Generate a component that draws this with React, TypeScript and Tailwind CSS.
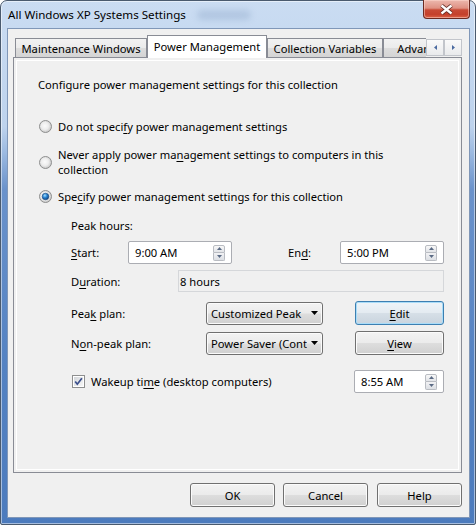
import React from "react";

const U = ({ children }: { children: React.ReactNode }) => (
  <span className="underline decoration-[1px] underline-offset-[2px]">{children}</span>
);

const BTN_GRAD =
  "bg-[linear-gradient(to_bottom,#f3f3f3_0%,#ebebeb_48%,#dddddd_52%,#d0d0d0_100%)]";

function Radio({ checked }: { checked?: boolean }) {
  return (
    <svg width="13" height="13" viewBox="0 0 13 13" className="shrink-0">
      <defs>
        <radialGradient id="rIn" cx="0.45" cy="0.45" r="0.55">
          <stop offset="0" stopColor="#fbfbfb" />
          <stop offset="0.55" stopColor="#ededed" />
          <stop offset="1" stopColor="#c8c8c8" />
        </radialGradient>
        <radialGradient id="rDot" cx="0.4" cy="0.35" r="0.7">
          <stop offset="0" stopColor="#a6e0ff" />
          <stop offset="0.45" stopColor="#2a86d4" />
          <stop offset="1" stopColor="#0a3c78" />
        </radialGradient>
      </defs>
      <circle cx="6.5" cy="6.5" r="6" fill="url(#rIn)" stroke="#8e8f8f" />
      {checked && (
        <circle cx="6.5" cy="6.5" r="3.3" fill="url(#rDot)" stroke="#19487e" strokeWidth="0.6" />
      )}
    </svg>
  );
}

function Checkbox() {
  return (
    <svg width="13" height="13" viewBox="0 0 13 13" className="shrink-0">
      <defs>
        <linearGradient id="cbG" x1="0" y1="0" x2="1" y2="1">
          <stop offset="0" stopColor="#d3d6da" />
          <stop offset="1" stopColor="#f7f7f7" />
        </linearGradient>
      </defs>
      <rect x="0.5" y="0.5" width="12" height="12" fill="#fff" stroke="#8e8f8f" />
      <rect x="2" y="2" width="9" height="9" fill="url(#cbG)" />
      <path d="M3.2 6.4 L5.3 9.2 L9.9 3.2" fill="none" stroke="#3b4f8c" strokeWidth="1.7" />
    </svg>
  );
}

function SpinArrows() {
  return (
    <div className="flex flex-col w-[12px] h-[16px] shrink-0">
      <div className="h-[8px] border border-[#b9bcc2] rounded-t-[2px] bg-[linear-gradient(to_bottom,#f8f8f8,#e2e4e8)] flex items-center justify-center">
        <svg width="5" height="3" viewBox="0 0 5 3">
          <path d="M2.5 0 L5 3 L0 3 Z" fill="#5a6a84" />
        </svg>
      </div>
      <div className="h-[8px] border border-t-0 border-[#b9bcc2] rounded-b-[2px] bg-[linear-gradient(to_bottom,#f2f2f4,#dcdfe4)] flex items-center justify-center">
        <svg width="5" height="3" viewBox="0 0 5 3">
          <path d="M0 0 L5 0 L2.5 3 Z" fill="#5a6a84" />
        </svg>
      </div>
    </div>
  );
}

function Spin({ value, className }: { value: string; className: string }) {
  return (
    <div
      className={`${className} h-[23px] bg-white border border-[#abadb3] rounded-[2px] flex items-center pl-[6px] pr-[6px] shrink-0`}
    >
      <span className="flex-1 whitespace-nowrap">{value}</span>
      <SpinArrows />
    </div>
  );
}

function Combo({ text }: { text: string }) {
  return (
    <div
      className={`w-[117px] h-[23px] rounded-[3px] border border-[#707070] ${BTN_GRAD} shadow-[inset_0_0_0_1px_#fbfbfb] flex items-center pl-[4px] pr-[4px] shrink-0`}
    >
      <span className="flex-1 overflow-hidden whitespace-nowrap">{text}</span>
      <svg width="7" height="4" viewBox="0 0 7 4" className="ml-[4px] shrink-0">
        <path d="M0 0 H7 L3.5 4 Z" fill="#000" />
      </svg>
    </div>
  );
}

function Button({
  children,
  className,
  focused,
}: {
  children: React.ReactNode;
  className: string;
  focused?: boolean;
}) {
  return (
    <div
      className={
        focused
          ? `${className} h-[24px] rounded-[3px] border border-[#3c7fb1] bg-[linear-gradient(to_bottom,#eef4f8_0%,#e4ebf1_48%,#d6dfe7_52%,#c9d4de_100%)] shadow-[inset_0_0_0_1px_#a9dcf8] flex items-center justify-center shrink-0`
          : `${className} h-[24px] rounded-[3px] border border-[#707070] ${BTN_GRAD} shadow-[inset_0_0_0_1px_#fbfbfb] flex items-center justify-center shrink-0`
      }
    >
      {children}
    </div>
  );
}

function ScrollBtn({ dir }: { dir: "l" | "r" }) {
  return (
    <div className="w-[18px] h-[17px] border border-[#c2c5cb] bg-[linear-gradient(to_bottom,#fafafa,#e9eaec)] flex items-center justify-center">
      <svg width="3" height="5" viewBox="0 0 3 5">
        {dir === "l" ? (
          <path d="M3 0 L3 5 L0 2.5 Z" fill="#4a6aa0" />
        ) : (
          <path d="M0 0 L0 5 L3 2.5 Z" fill="#4a6aa0" />
        )}
      </svg>
    </div>
  );
}

function Tab({ label, className }: { label: string; className: string }) {
  return (
    <div
      className={`${className} h-[19px] mb-[1px] shrink-0 border border-b-0 border-[#898c95] bg-[linear-gradient(to_bottom,#f2f2f2_0%,#ebebeb_50%,#dddddd_51%,#d4d4d4_100%)] flex items-center justify-center whitespace-nowrap`}
    >
      {label}
    </div>
  );
}

export default function App() {
  return (
    <div className="w-[476px] h-[525px] font-['Segoe_UI','Noto_Sans',sans-serif] text-[11.2px] leading-[15px] text-black select-none">
      <div className="relative w-full h-full flex flex-col rounded-t-[7px] rounded-b-[2px] border border-[#4a5a6e] bg-[linear-gradient(to_bottom,#cadcf2_0%,#bed3ed_24%,#9cbae1_29%,#6a92cb_36%,#5482c2_70%,#4c7bbd_100%)] shadow-[inset_0_0_0_1px_rgba(255,255,255,0.5)]">
        {/* title bar */}
        <div className="relative h-[27px] flex items-center pl-[7px]">
          <div className="absolute left-[196px] top-[9px] w-[54px] h-[10px] rounded-[5px] bg-[#8fa8c9] opacity-40 blur-[3px]" />
          <span className="relative text-[11.6px]">All Windows XP Systems Settings</span>
          <div className="absolute right-[5px] top-[-1px] w-[47px] h-[19px] rounded-b-[4px] border border-t-0 border-[#6b2a22] bg-[linear-gradient(to_bottom,#ecb8ae_0%,#df9183_45%,#c84a36_55%,#c4402c_80%,#dc6247_100%)] shadow-[inset_0_0_0_1px_rgba(255,220,210,0.5)] flex items-center justify-center">
            <svg width="15" height="11" viewBox="0 0 15 11">
              <path d="M2.5 1.5 L12.5 9.5 M12.5 1.5 L2.5 9.5" stroke="#5e2a23" strokeWidth="4" />
              <path d="M2.5 1.5 L12.5 9.5 M12.5 1.5 L2.5 9.5" stroke="#ffffff" strokeWidth="2.3" />
            </svg>
          </div>
        </div>

        {/* client area */}
        <div className="flex-1 ml-[6px] mr-[5px] mb-[6px] border border-[#8097b8] bg-[#f0f0f0] flex flex-col pl-[5px] pr-[7px]">
          {/* tabs */}
          <div className="relative z-10 mt-[6px] h-[22px] flex">
            <div className="ml-[2px] w-[411px] h-[23px] overflow-hidden flex items-end">
              <Tab label="Maintenance Windows" className="w-[132px]" />
              <div className="w-[120px] h-[23px] shrink-0 border border-b-0 border-[#898c95] bg-white flex items-center justify-center whitespace-nowrap pb-[1px]">
                Power Management
              </div>
              <Tab label="Collection Variables" className="w-[116px]" />
              <Tab label="Advanced" className="w-[80px]" />
            </div>
            <div className="flex mt-[4px] h-[17px]">
              <ScrollBtn dir="l" />
              <ScrollBtn dir="r" />
            </div>
          </div>

          {/* panel */}
          <div className="h-[416px] border border-[#898c95] bg-[#f0f0f0] p-[2px]">
            <div className="h-full border border-white pl-[21px] pt-[16px]">
              <div>Configure power management settings for this collection</div>

              <div className="mt-[27px] flex items-center">
                <span className="ml-[1px]">
                  <Radio />
                </span>
                <span className="ml-[6px] whitespace-nowrap">
                  Do not speci<U>f</U>y power management settings
                </span>
              </div>

              <div className="mt-[13px] flex items-center">
                <span className="ml-[1px]">
                  <Radio />
                </span>
                <div className="ml-[6px] flex flex-col whitespace-nowrap">
                  <span>
                    Never apply power ma<U>n</U>agement settings to computers in this
                  </span>
                  <span>collection</span>
                </div>
              </div>

              <div className="mt-[12px] flex items-center">
                <span className="ml-[1px]">
                  <Radio checked />
                </span>
                <span className="ml-[6px] whitespace-nowrap">
                  Spe<U>c</U>ify power management settings for this collection
                </span>
              </div>

              <div className="ml-[33px] w-[373px]">
                <div className="mt-[14px]">Peak hours:</div>

                <div className="mt-[8px] h-[23px] flex items-center">
                  <span className="w-[57px] shrink-0">
                    <U>S</U>tart:
                  </span>
                  <Spin value="9:00 AM" className="w-[104px]" />
                  <span className="ml-[56px] w-[52px] shrink-0">
                    En<U>d</U>:
                  </span>
                  <Spin value="5:00 PM" className="w-[104px]" />
                </div>

                <div className="mt-[6px] h-[22px] flex items-center">
                  <span className="w-[107px] shrink-0">
                    D<U>u</U>ration:
                  </span>
                  <div className="flex-1 h-[22px] border border-[#d5d7da] bg-[#f0f0f0] flex items-center pl-[1px]">
                    8 hours
                  </div>
                </div>

                <div className="mt-[9px] h-[24px] flex items-center">
                  <span className="w-[135px] shrink-0">
                    Pea<U>k</U> plan:
                  </span>
                  <Combo text="Customized Peak" />
                  <Button className="ml-[32px] w-[89px]" focused>
                    <span>
                      <U>E</U>dit
                    </span>
                  </Button>
                </div>

                <div className="mt-[6px] h-[24px] flex items-center">
                  <span className="w-[135px] shrink-0">
                    N<U>o</U>n-peak plan:
                  </span>
                  <Combo text="Power Saver (Contoso)" />
                  <Button className="ml-[32px] w-[89px]">
                    <span>
                      <U>V</U>iew
                    </span>
                  </Button>
                </div>

                <div className="mt-[15px] h-[23px] flex items-center">
                  <span className="ml-[1px]">
                    <Checkbox />
                  </span>
                  <span className="ml-[6px] whitespace-nowrap">
                    Wakeup ti<U>m</U>e (desktop computers)
                  </span>
                  <div className="ml-auto">
                    <Spin value="8:55 AM" className="w-[90px]" />
                  </div>
                </div>
              </div>
            </div>
          </div>

          {/* dialog buttons */}
          <div className="mt-[10px] flex justify-end">
            <Button className="w-[85px]">OK</Button>
            <Button className="ml-[8px] w-[85px]">Cancel</Button>
            <Button className="ml-[9px] w-[85px]">Help</Button>
          </div>
        </div>
      </div>
    </div>
  );
}
